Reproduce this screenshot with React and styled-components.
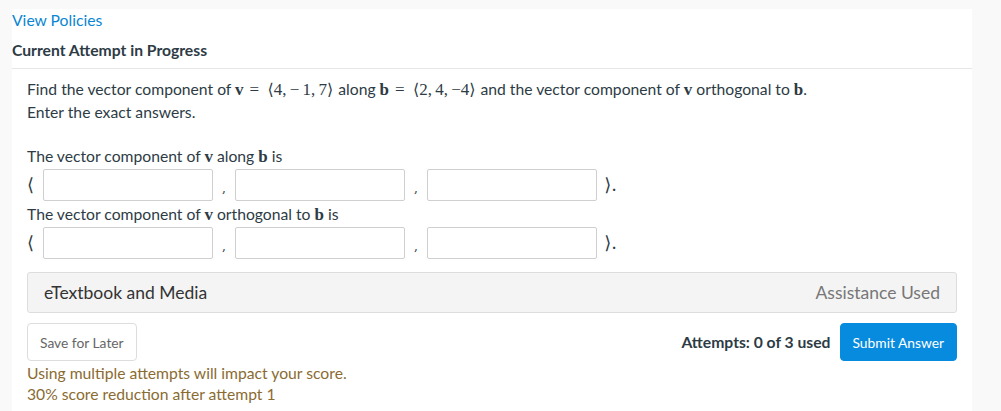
import styled, { createGlobalStyle } from "styled-components";

const GlobalStyle = createGlobalStyle`
	body {
		margin: 0;
		background: #f9f9f9;
		font-family: Lato, "Open Sans", sans-serif;
		color: #2d3b45;
	}
`;

const Panel = styled.div`
	margin: 9px 29px 0 12px;
	background: #fff;
	min-height: 402px;
`;

const Header = styled.div`
	border-bottom: 1px solid #e6e6e6;
	padding-bottom: 8px;
`;

const PolicyLink = styled.a`
	display: block;
	font-size: 15.7px;
	line-height: 22px;
	color: #0a86d4;
	text-decoration: none;
`;

const Title = styled.div`
	margin-top: 9px;
	font-size: 15.7px;
	line-height: 20px;
	font-weight: bold;
	color: #2d3b45;
`;

const Body = styled.div`
	padding: 9px 15px 0;
	font-size: 15.7px;
	line-height: 23px;
`;

const Prompt = styled.p`
	margin: 0;
`;

const Label = styled.div`
	margin-top: ${(props) => props.$top || 0}px;
`;

const MathVar = styled.span`
	font-family: "Liberation Serif", "DejaVu Serif", serif;
	font-weight: bold;
	font-size: 17px;
	line-height: 1;
`;

const MathText = styled.span`
	font-family: "Liberation Serif", "DejaVu Serif", serif;
	font-size: 17px;
	line-height: 1;
	margin: 0 5px 0 6px;
	word-spacing: -1px;
`;

const Angle = styled.span`
	font-family: "DejaVu Serif", serif;
	font-size: 16px;
	margin: ${(props) => (props.$open ? "0 0 0 5px" : "0")};
`;

const VectorRow = styled.div`
	display: flex;
	align-items: center;
	height: 32px;
	margin-top: 1px;
`;

const Bracket = styled.span`
	font-family: "DejaVu Serif", serif;
	font-size: 18px;
	line-height: 1;
	color: #2d3b45;
	width: ${(props) => props.$width}px;
	text-align: ${(props) => props.$align || "left"};
`;

const Comma = styled.span`
	width: 22px;
	text-align: center;
	font-family: "DejaVu Serif", serif;
	font-size: 12px;
	line-height: 1;
	color: #2d3b45;
	padding-top: 6px;
`;

const Field = styled.input`
	box-sizing: border-box;
	width: 170px;
	height: 32px;
	border: 1px solid #cfcfcf;
	border-radius: 2px;
	background: #fff;
`;

const MediaBar = styled.div`
	display: flex;
	justify-content: space-between;
	align-items: center;
	margin-top: 13px;
	height: 41px;
	box-sizing: border-box;
	padding: 0 16px;
	background: #f4f4f4;
	border: 1px solid #ddd;
	border-radius: 3px;
	font-size: 17.5px;
	color: #333;
`;

const Muted = styled.span`
	color: #777;
`;

const Actions = styled.div`
	display: flex;
	justify-content: space-between;
	align-items: center;
	margin-top: 10px;
`;

const Button = styled.button`
	height: 38px;
	padding: 0 12px;
	border-radius: 4px;
	font-family: Lato, sans-serif;
	font-size: 13.8px;
	border: 1px solid ${(props) => (props.$primary ? "#078bdf" : "#ddd")};
	background: ${(props) => (props.$primary ? "#078bdf" : "#fff")};
	color: ${(props) => (props.$primary ? "#fff" : "#666")};
`;

const Submit = styled.div`
	display: flex;
	align-items: center;
	gap: 9px;
`;

const Attempts = styled.span`
	font-weight: bold;
	font-size: 15.7px;
`;

const Warning = styled.div`
	margin-top: 2px;
	color: #8a6b32;
	font-size: 15.7px;
	line-height: 21px;
`;

function Vector() {
	return (
		<VectorRow>
			<Bracket $width={16}>⟨</Bracket>
			<Field />
			<Comma>,</Comma>
			<Field />
			<Comma>,</Comma>
			<Field />
			<Bracket $width={20} $align="right">⟩.</Bracket>
		</VectorRow>
	);
}

export default function App() {
	return (
		<>
			<GlobalStyle />
			<Panel>
				<Header>
					<PolicyLink href="#">View Policies</PolicyLink>
					<Title>Current Attempt in Progress</Title>
				</Header>
				<Body>
					<Prompt>
						Find the vector component of <MathVar>v</MathVar>
						<MathText>
							= <Angle $open>⟨</Angle>4, − 1, 7<Angle>⟩</Angle>
						</MathText>
						along <MathVar>b</MathVar>
						<MathText>
							= <Angle $open>⟨</Angle>2, 4, −4<Angle>⟩</Angle>
						</MathText>
						and the vector component of <MathVar>v</MathVar> orthogonal to{" "}
						<MathVar>b</MathVar>.
					</Prompt>
					<Prompt>Enter the exact answers.</Prompt>
					<Label $top={21}>
						The vector component of <MathVar>v</MathVar> along{" "}
						<MathVar>b</MathVar> is
					</Label>
					<Vector />
					<Label $top={2}>
						The vector component of <MathVar>v</MathVar> orthogonal to{" "}
						<MathVar>b</MathVar> is
					</Label>
					<Vector />
					<MediaBar>
						<span>eTextbook and Media</span>
						<Muted>Assistance Used</Muted>
					</MediaBar>
					<Actions>
						<Button>Save for Later</Button>
						<Submit>
							<Attempts>Attempts: 0 of 3 used</Attempts>
							<Button $primary>Submit Answer</Button>
						</Submit>
					</Actions>
					<Warning>
						Using multiple attempts will impact your score.
						<br />
						30% score reduction after attempt 1
					</Warning>
				</Body>
			</Panel>
		</>
	);
}
